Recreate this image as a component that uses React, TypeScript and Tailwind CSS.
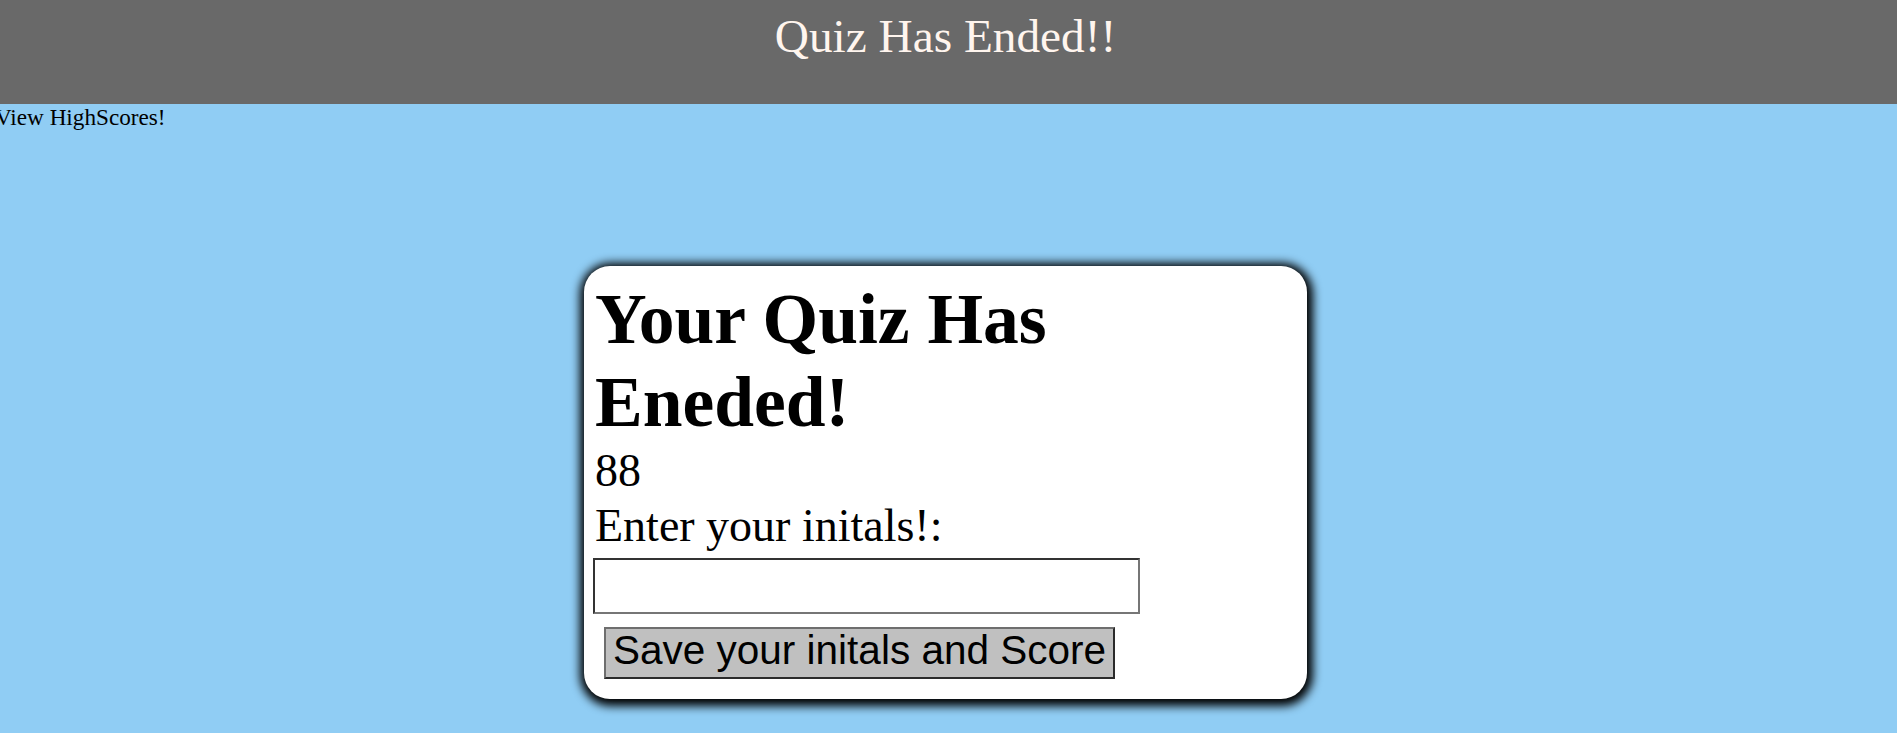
import React from "react";

export default function App() {
  return (
    <div className="min-h-[733px] w-full bg-[#90cdf4] font-['Liberation_Serif',serif] text-black">
      <header className="h-[104px] bg-[#696969] pt-[10px] pr-[6px] text-center">
        <h1 className="text-[47.3px] leading-[52px] font-normal text-[#fff5ee]">Quiz Has Ended!!</h1>
      </header>
      <div className="ml-[-5px] text-[23.2px] leading-[26px]">View HighScores!</div>
      <div className="mt-[136px] flex justify-center pr-[6px]">
        <div className="w-[723px] rounded-[26px] bg-white px-[9px] pt-[11px] pb-[20px] shadow-[1px_2px_10px_5px_#000]">
          <h2 className="pl-[2px] text-[71.5px] leading-[83px] font-bold">
            Your Quiz Has
            <br />
            Eneded!
          </h2>
          <div className="pl-[2px] pt-[1px] text-[46px] leading-[54px]">88</div>
          <div className="pl-[2px] pt-[1px] text-[46px] leading-[54px]">Enter your initals!:</div>
          <input
            type="text"
            className="mt-[5px] block h-[56px] w-[547px] border-2 border-t-[#333333] border-l-[#333333] border-r-[#767676] border-b-[#767676] bg-white px-1 text-[30px] outline-none"
          />
          <button
            type="button"
            className="mt-[13px] ml-[11px] block h-[52px] whitespace-nowrap border-2 border-t-[#6e6e6e] border-l-[#6e6e6e] border-r-[#2b2b2b] border-b-[#2b2b2b] bg-[#c0c0c0] px-[7px] pt-[1px] pb-[7px] text-center font-['Liberation_Sans',Arial,sans-serif] text-[40.5px] leading-[40px] text-black"
          >
            Save your initals and Score
          </button>
        </div>
      </div>
    </div>
  );
}
